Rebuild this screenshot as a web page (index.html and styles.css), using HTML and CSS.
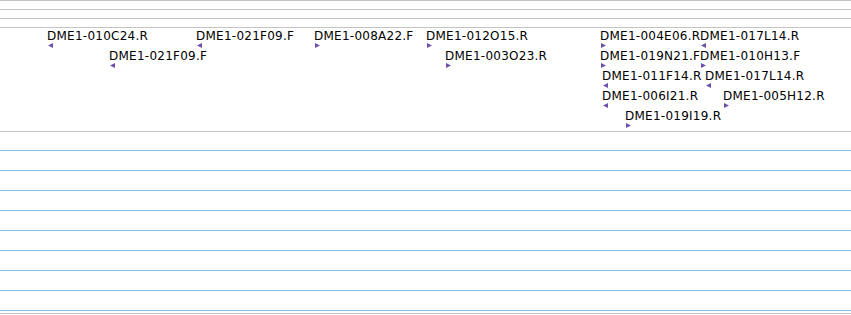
FILE: index.html
```html
<!DOCTYPE html>
<html lang="en">
<head>
    <meta charset="UTF-8">
    <title>Clone track</title>
    <link rel="stylesheet" href="styles.css">
</head>
<body>

<div class="ruler">
    <div class="ruler-row"></div>
    <div class="ruler-row"></div>
    <div class="ruler-row"></div>
</div>

<div class="track">
    <div class="feature" style="left: 47px; top: 1px;">DME1-010C24.R<svg class="rev" viewBox="0 0 5 5"><polygon points="0,2.5 5,0 5,5"/></svg></div>
    <div class="feature" style="left: 196px; top: 1px;">DME1-021F09.F<svg class="rev" viewBox="0 0 5 5"><polygon points="0,2.5 5,0 5,5"/></svg></div>
    <div class="feature" style="left: 314px; top: 1px;">DME1-008A22.F<svg class="fwd" viewBox="0 0 5 5"><polygon points="0,0 5,2.5 0,5"/></svg></div>
    <div class="feature" style="left: 426px; top: 1px;">DME1-012O15.R<svg class="fwd" viewBox="0 0 5 5"><polygon points="0,0 5,2.5 0,5"/></svg></div>
    <div class="feature" style="left: 600px; top: 1px;">DME1-004E06.R<svg class="fwd" viewBox="0 0 5 5"><polygon points="0,0 5,2.5 0,5"/></svg></div>
    <div class="feature" style="left: 700px; top: 1px;">DME1-017L14.R<svg class="rev" viewBox="0 0 5 5"><polygon points="0,2.5 5,0 5,5"/></svg></div>

    <div class="feature" style="left: 109px; top: 21px;">DME1-021F09.F<svg class="rev" viewBox="0 0 5 5"><polygon points="0,2.5 5,0 5,5"/></svg></div>
    <div class="feature" style="left: 445px; top: 21px;">DME1-003O23.R<svg class="fwd" viewBox="0 0 5 5"><polygon points="0,0 5,2.5 0,5"/></svg></div>
    <div class="feature" style="left: 600px; top: 21px;">DME1-019N21.F<svg class="fwd" viewBox="0 0 5 5"><polygon points="0,0 5,2.5 0,5"/></svg></div>
    <div class="feature" style="left: 700px; top: 21px;">DME1-010H13.F<svg class="fwd" viewBox="0 0 5 5"><polygon points="0,0 5,2.5 0,5"/></svg></div>

    <div class="feature" style="left: 602px; top: 41px;">DME1-011F14.R<svg class="rev" viewBox="0 0 5 5"><polygon points="0,2.5 5,0 5,5"/></svg></div>
    <div class="feature" style="left: 705px; top: 41px;">DME1-017L14.R<svg class="rev" viewBox="0 0 5 5"><polygon points="0,2.5 5,0 5,5"/></svg></div>

    <div class="feature" style="left: 602px; top: 61px;">DME1-006I21.R<svg class="rev" viewBox="0 0 5 5"><polygon points="0,2.5 5,0 5,5"/></svg></div>
    <div class="feature" style="left: 723px; top: 61px;">DME1-005H12.R<svg class="fwd" viewBox="0 0 5 5"><polygon points="0,0 5,2.5 0,5"/></svg></div>

    <div class="feature" style="left: 625px; top: 81px;">DME1-019I19.R<svg class="fwd" viewBox="0 0 5 5"><polygon points="0,0 5,2.5 0,5"/></svg></div>
</div>

<div class="lanes">
    <div class="lane"></div>
    <div class="lane"></div>
    <div class="lane"></div>
    <div class="lane"></div>
    <div class="lane"></div>
    <div class="lane"></div>
    <div class="lane"></div>
    <div class="lane"></div>
    <div class="lane"></div>
</div>

</body>
</html>
```

FILE: styles.css
```css
* {
    margin: 0;
    padding: 0;
    box-sizing: border-box;
}
body {
    font-family: "DejaVu Sans", Verdana, sans-serif;
    font-size: 12px;
    background-color: #fff;
    color: #000;
    overflow: hidden;
}
.ruler-row {
    height: 9px;
    border-top: 1px solid #c4c4c4;
}
.track {
    position: relative;
    height: 105px;
    border-top: 1px solid #c4c4c4;
    border-bottom: 1px solid #c4c4c4;
}
.feature {
    position: absolute;
    line-height: 14px;
    letter-spacing: 0.25px;
    white-space: nowrap;
}
.feature svg {
    display: block;
    width: 5px;
    height: 5px;
    margin-left: 1px;
    fill: #6d4fae;
}
.lanes {
    height: 182px;
    padding-top: 18px;
    overflow: hidden;
    border-bottom: 1px solid #c4c4c4;
}
.lane {
    height: 20px;
    border-top: 1px solid #88bde6;
}
```
